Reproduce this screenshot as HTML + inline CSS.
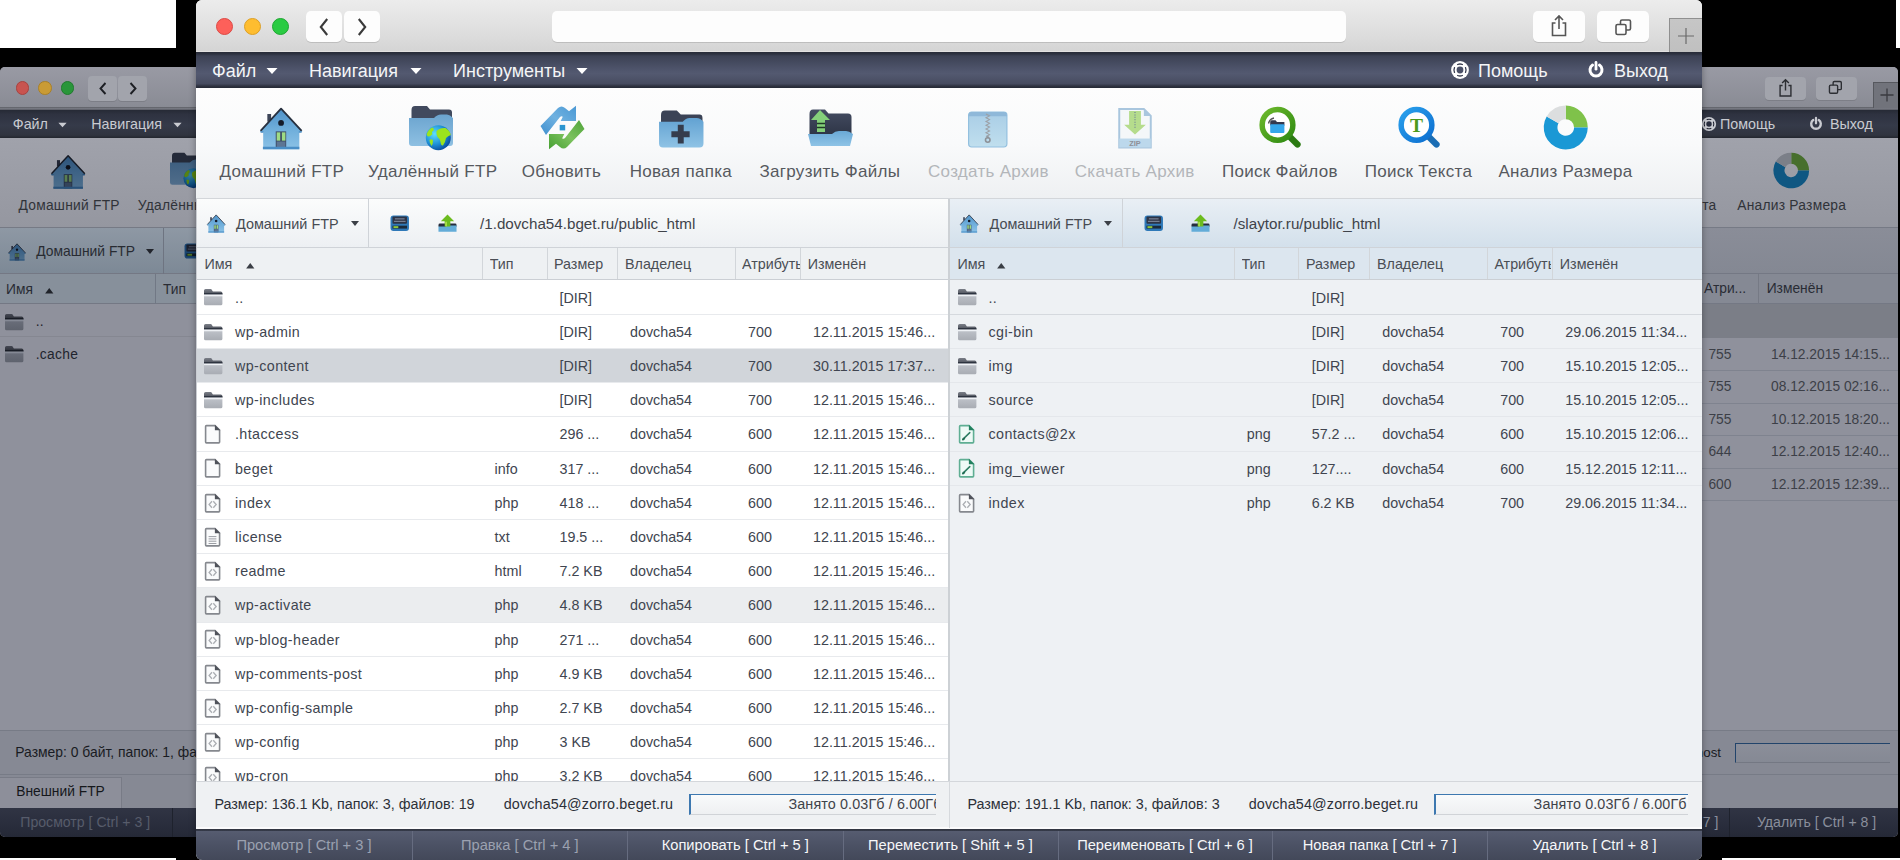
<!DOCTYPE html><html><head><meta charset="utf-8"><style>
*{margin:0;padding:0;box-sizing:border-box}
html,body{width:1900px;height:860px;overflow:hidden;background:#000;font-family:"Liberation Sans", sans-serif;}
.a{position:absolute}
.t{position:absolute;white-space:nowrap}
svg{position:absolute;overflow:visible}
</style></head><body>
<div class="a" style="left:0;top:0;width:176px;height:48px;background:#fff"></div>
<div class="a" style="left:1896px;top:0;width:4px;height:48px;background:#fff"></div>
<div class="a" style="left:0;top:858px;width:176px;height:2px;background:#fff"></div>
<div class="a" style="left:1722px;top:858px;width:178px;height:2px;background:#fff"></div>
<div class="a" style="left:0;top:67px;width:1898px;height:770px;border-radius:5px;overflow:hidden;background:#8f919c">
<div class="a" style="left:0;top:0;width:1898px;height:41px;background:linear-gradient(#999aa4,#898b94)"></div>
<div class="a" style="left:0;top:40px;width:1898px;height:1px;background:#65676e"></div>
<div class="a" style="left:15.600000000000001px;top:14.3px;width:13.4px;height:13.4px;border-radius:50%;background:#c85450;border:1px solid #a8423f"></div>
<div class="a" style="left:38.199999999999996px;top:14.3px;width:13.4px;height:13.4px;border-radius:50%;background:#c99b35;border:1px solid #a8802a"></div>
<div class="a" style="left:60.7px;top:14.3px;width:13.4px;height:13.4px;border-radius:50%;background:#2a963a;border:1px solid #217a2e"></div>
<div class="a" style="left:88px;top:9.2px;width:29px;height:24.39999999999999px;background:#a2a4ac;border-radius:4px;box-shadow:0 1px 0 rgba(0,0,0,.1)"></div>
<div class="a" style="left:118px;top:9.2px;width:29px;height:24.39999999999999px;background:#a2a4ac;border-radius:4px;box-shadow:0 1px 0 rgba(0,0,0,.1)"></div>
<svg style="left:97px;top:14px" width="12" height="15" viewBox="0 0 12 15"><path d="M8.5 2 L3.5 7.5 L8.5 13" stroke="#1d1f24" stroke-width="1.9" fill="none"/></svg>
<svg style="left:127px;top:14px" width="12" height="15" viewBox="0 0 12 15"><path d="M3.5 2 L8.5 7.5 L3.5 13" stroke="#1d1f24" stroke-width="1.9" fill="none"/></svg>
<div class="a" style="left:1765px;top:9.6px;width:41px;height:23.400000000000006px;background:#a2a4ac;border-radius:4px;box-shadow:0 1px 0 rgba(0,0,0,.1)"></div>
<div class="a" style="left:1815.7px;top:9.6px;width:41.299999999999955px;height:23.400000000000006px;background:#a2a4ac;border-radius:4px;box-shadow:0 1px 0 rgba(0,0,0,.1)"></div>
<svg style="left:1777px;top:11px" width="17" height="20" viewBox="0 0 20 24"><path d="M6.5 9 H3.5 V21.5 H16.5 V9 H13.5" stroke="#2c2e33" stroke-width="1.7" fill="none"/><path d="M10 2 V15 M6 6 L10 2 L14 6" stroke="#2c2e33" stroke-width="1.7" fill="none"/></svg>
<svg style="left:1827px;top:12px" width="18" height="18" viewBox="0 0 22 22"><rect x="3" y="7.5" width="10" height="10" rx="1.5" stroke="#2c2e33" stroke-width="1.7" fill="none"/><path d="M7.5 7.5 V4.5 Q7.5 3 9 3 H16 Q17.5 3 17.5 4.5 V11.5 Q17.5 13 16 13 H13" stroke="#2c2e33" stroke-width="1.7" fill="none"/></svg>
<div class="a" style="left:1873px;top:15px;width:30px;height:26px;background:#71737b;border-left:1px solid #56585e;border-top:1px solid #56585e"></div>
<svg style="left:1878px;top:19px" width="18" height="18" viewBox="0 0 22 22"><path d="M11 3 V19 M3 11 H19" stroke="#3a3b40" stroke-width="1.6"/></svg>
<div class="a" style="left:0;top:40.5px;width:1898px;height:2px;background:linear-gradient(#7d7f88,#5a5c65)"></div>
<div class="a" style="left:0;top:42.5px;width:1898px;height:28.5px;background:linear-gradient(#262a35 0,#2e3240 15%,#353a49 55%,#30343f 90%,#23262e 100%)"></div>
<div class="t" style="left:12.8px;top:48.62px;font-size:14.3px;line-height:16.45px;color:#c9cbd1;">Файл</div>
<svg style="left:57.6px;top:55px" width="9" height="6" viewBox="0 0 12 8"><path d="M0.5 1 H11.5 L6 7Z" fill="#c9cbd1"/></svg>
<div class="t" style="left:91.3px;top:48.62px;font-size:14.3px;line-height:16.45px;color:#c9cbd1;">Навигация</div>
<svg style="left:172.7px;top:55px" width="9" height="6" viewBox="0 0 12 8"><path d="M0.5 1 H11.5 L6 7Z" fill="#c9cbd1"/></svg>
<svg style="left:1700.5px;top:48.5px" width="16" height="16" viewBox="0 0 20 20"><circle cx="10" cy="10" r="8.9" fill="#c9cbd1"/><circle cx="10" cy="10" r="3.4" fill="#292e3f"/><path d="M7.6 4.5 A6 6 0 0 1 12.4 4.5 M7.6 15.5 A6 6 0 0 0 12.4 15.5 M4.5 7.6 A6 6 0 0 0 4.5 12.4 M15.5 7.6 A6 6 0 0 1 15.5 12.4" stroke="#202432" stroke-width="1.3" fill="none" stroke-linecap="round"/></svg>
<div class="t" style="left:1720px;top:48.62px;font-size:14.3px;line-height:16.45px;color:#c9cbd1;">Помощь</div>
<svg style="left:1807.5px;top:48.5px" width="16" height="16" viewBox="0 0 20 20"><path d="M6.56 5.08 A6 6 0 1 0 13.44 5.08" stroke="#c9cbd1" stroke-width="3" fill="none" stroke-linecap="round"/><path d="M10 2.4 V9.2" stroke="#c9cbd1" stroke-width="2.8" stroke-linecap="round"/></svg>
<div class="t" style="left:1830px;top:48.62px;font-size:14.3px;line-height:16.45px;color:#c9cbd1;">Выход</div>
<div class="a" style="left:0;top:71px;width:1898px;height:89px;background:linear-gradient(#a0a2ab,#9597a0)"></div>
<div class="a" style="left:0;top:159.5px;width:1898px;height:1px;background:#767a85"></div>
<div class="t" style="left:18.5px;top:130.78px;font-size:13.8px;line-height:15.87px;color:#303339;letter-spacing:0.25px">Домашний FTP</div>
<div class="t" style="left:137.8px;top:130.78px;font-size:13.8px;line-height:15.87px;color:#303339;letter-spacing:0.25px">Удалённый FTP</div>
<div class="t" style="left:1116.5px;width:600px;text-align:right;top:130.78px;font-size:13.8px;line-height:15.87px;color:#303339;letter-spacing:0.25px">Поиск Текста</div>
<div class="t" style="left:1737.2px;top:130.78px;font-size:13.8px;line-height:15.87px;color:#303339;letter-spacing:0.25px">Анализ Размера</div>
<svg style="left:50.5px;top:86.5px" width="34.5" height="35" viewBox="0 0 44 44">
<defs><linearGradient id="hb0" x1="0" y1="0" x2="0" y2="1"><stop offset="0" stop-color="#2c537a"/><stop offset=".5" stop-color="#3e6386"/><stop offset="1" stop-color="#4e6f8c"/></linearGradient></defs>
<rect x="7.6" y="7.5" width="3.9" height="8" fill="#222736"/>
<path d="M0.2 25.6 L21.8 2 L43.5 25.6 L40.7 26.2 V44 H3.3 V26.2Z" fill="url(#hb0)"/>
<path d="M0.6 25 L21.8 2 L43.1 25" stroke="#161b26" stroke-width="1.9" fill="none" stroke-linejoin="round"/>
<path d="M0 25.3 L3.5 25.3 L3.5 27 L0.8 27Z M43.7 25.3 L40.2 25.3 L40.2 27 L42.9 27Z" fill="#295076"/>
<circle cx="21.8" cy="16.7" r="3" fill="#0b0f19"/>
<rect x="16.3" y="25.5" width="10.8" height="18" fill="#232c3e"/>
<rect x="17.3" y="26.5" width="3.6" height="8.6" fill="#587d51"/>
<rect x="22.7" y="26.5" width="3.6" height="8.6" fill="#587d51"/>
<rect x="17.3" y="36" width="9" height="7" fill="#34435a"/>
<rect x="3" y="41.4" width="37.7" height="2.6" fill="#295179"/>
</svg>
<svg style="left:170px;top:84.7px" width="36" height="36" viewBox="0 0 45 45">
<defs><linearGradient id="gf11" x1="0" y1="0" x2="0" y2="1"><stop offset="0" stop-color="#3c5d7e"/><stop offset="1" stop-color="#506d8a"/></linearGradient>
<radialGradient id="gl11" cx=".35" cy=".35" r=".7"><stop offset="0" stop-color="#35809c"/><stop offset=".6" stop-color="#105283"/><stop offset="1" stop-color="#062d62"/></radialGradient></defs>
<path d="M2.5 5 Q2.5 1 6 1 H18 L21 4.5 H40 Q43 4.5 43 7.5 V20 H2.5Z" fill="#242a39"/>
<path d="M0 13 H25 Q28 9.5 32 9.5 H38 Q41 9.5 44 13 V38 Q44 41 41 41 H3 Q0 41 0 38Z" fill="url(#gf11)"/>
<circle cx="29.3" cy="32.7" r="12.5" fill="url(#gl11)"/>
<path d="M17.6 30 Q18.5 25 23 22.5 Q25.5 23 24.5 25.5 Q22 27 23.5 29 Q21.5 31.5 19 31.5Z M20.5 35 Q22.5 33.5 24 35.5 Q24 39 22.5 41 Q20.5 38.5 20.5 35Z M27.5 26 Q31 22.5 36.5 23 Q41 25.5 41.8 30 Q39 31 37 33 Q36.5 37 34 40.5 Q32 41 31.5 37 Q31 33.5 28.5 32 Q27 29 27.5 26Z" fill="#578212"/>
</svg>
<svg style="left:1772.8px;top:84.6px" width="36.5" height="37" viewBox="0 0 46 46">
<path d="M23 0.5 A22.5 22.5 0 0 1 45.5 23 H31.5 A8.5 8.5 0 0 0 23 14.5Z" fill="#476f2d"/>
<path d="M45.5 23 A22.5 22.5 0 1 1 3.5 11.75 L15.6 18.75 A8.5 8.5 0 1 0 31.5 23Z" fill="#0f5782"/>
<path d="M3.5 11.75 A22.5 22.5 0 0 1 23 0.5 V14.5 A8.5 8.5 0 0 0 15.6 18.75Z" fill="#7b7f88"/>
</svg>
<div class="a" style="left:0;top:160.5px;width:950px;height:46px;background:linear-gradient(#8e98a4,#7d8996);border-bottom:1px solid #747884"></div>
<div class="a" style="left:163px;top:160.5px;width:1px;height:46px;background:#6e7481"></div>
<svg style="left:7.8px;top:175.5px" width="18.2" height="17.5" viewBox="0 0 44 44">
<defs><linearGradient id="hb3" x1="0" y1="0" x2="0" y2="1"><stop offset="0" stop-color="#2c537a"/><stop offset=".5" stop-color="#3e6386"/><stop offset="1" stop-color="#4e6f8c"/></linearGradient></defs>
<rect x="7.6" y="7.5" width="3.9" height="8" fill="#222736"/>
<path d="M0.2 25.6 L21.8 2 L43.5 25.6 L40.7 26.2 V44 H3.3 V26.2Z" fill="url(#hb3)"/>
<path d="M0.6 25 L21.8 2 L43.1 25" stroke="#161b26" stroke-width="1.9" fill="none" stroke-linejoin="round"/>
<path d="M0 25.3 L3.5 25.3 L3.5 27 L0.8 27Z M43.7 25.3 L40.2 25.3 L40.2 27 L42.9 27Z" fill="#295076"/>
<circle cx="21.8" cy="16.7" r="3" fill="#0b0f19"/>
<rect x="16.3" y="25.5" width="10.8" height="18" fill="#232c3e"/>
<rect x="17.3" y="26.5" width="3.6" height="8.6" fill="#587d51"/>
<rect x="22.7" y="26.5" width="3.6" height="8.6" fill="#587d51"/>
<rect x="17.3" y="36" width="9" height="7" fill="#34435a"/>
<rect x="3" y="41.4" width="37.7" height="2.6" fill="#295179"/>
</svg>
<div class="t" style="left:36.3px;top:176.73px;font-size:13.86px;line-height:15.94px;color:#282b32;">Домашний FTP</div>
<svg style="left:145.6px;top:182.3px" width="8" height="5" viewBox="0 0 8 5"><path d="M0 0 H8 L4 5Z" fill="#21242b"/></svg>
<svg style="left:184px;top:176px" width="19" height="16" viewBox="0 0 20 17">
<rect x="0.5" y="0.5" width="19" height="16" rx="3" fill="#1a4570"/>
<rect x="2.5" y="1.5" width="15" height="7.5" rx="1" fill="#191e2b"/>
<rect x="5" y="3.5" width="10" height="1" fill="#4d5466"/>
<rect x="4" y="6" width="12" height="1" fill="#4d5466"/>
<rect x="2.5" y="11" width="15" height="3" fill="#0f1924"/>
<rect x="3.5" y="11.5" width="5" height="2" fill="#507223"/>
</svg>
<div class="a" style="left:0;top:206.5px;width:950px;height:30px;background:#87909b;border-bottom:1px solid #747884"></div>
<div class="a" style="left:155.2px;top:206.5px;width:1px;height:30px;background:#717885"></div>
<div class="t" style="left:6.1px;top:214.88px;font-size:13.8px;line-height:15.87px;color:#292c34;">Имя</div>
<svg style="left:44.5px;top:220.5px" width="8.5" height="5.5" viewBox="0 0 9 6"><path d="M0 6 H9 L4.5 0Z" fill="#20232a"/></svg>
<div class="t" style="left:163px;top:214.88px;font-size:13.8px;line-height:15.87px;color:#292c34;">Тип</div>
<div class="a" style="left:0;top:269.2px;width:950px;height:1px;background:#858791"></div>
<svg style="left:5px;top:246.5px" width="18.4" height="16.3" viewBox="0 0 18.4 16.3">
<defs><linearGradient id="ft5" x1="0" y1="0" x2="0" y2="1"><stop offset="0" stop-color="#454853"/><stop offset="1" stop-color="#2a2d36"/></linearGradient>
<linearGradient id="fb5" x1="0" y1="0" x2="0" y2="1"><stop offset="0" stop-color="#696d79"/><stop offset="1" stop-color="#5e626d"/></linearGradient></defs>
<path d="M0 1.6 Q0 0 1.6 0 H7.2 L8.9 2.4 H16.8 Q18.4 2.4 18.4 4 V5.4 H0Z" fill="url(#ft5)"/>
<rect x="0" y="4.3" width="18.4" height="1.2" fill="#11151f"/>
<rect x="0" y="5.6" width="18.4" height="1.7" fill="#858995"/>
<path d="M0 7.3 H18.4 V14.8 Q18.4 16.3 16.9 16.3 H1.5 Q0 16.3 0 14.8Z" fill="url(#fb5)"/>
</svg>
<div class="t" style="left:35.7px;top:247.48px;font-size:13.8px;line-height:15.87px;color:#21242d;letter-spacing:0.3px">..</div>
<svg style="left:5px;top:279.0px" width="18.4" height="16.3" viewBox="0 0 18.4 16.3">
<defs><linearGradient id="ft6" x1="0" y1="0" x2="0" y2="1"><stop offset="0" stop-color="#454853"/><stop offset="1" stop-color="#2a2d36"/></linearGradient>
<linearGradient id="fb6" x1="0" y1="0" x2="0" y2="1"><stop offset="0" stop-color="#696d79"/><stop offset="1" stop-color="#5e626d"/></linearGradient></defs>
<path d="M0 1.6 Q0 0 1.6 0 H7.2 L8.9 2.4 H16.8 Q18.4 2.4 18.4 4 V5.4 H0Z" fill="url(#ft6)"/>
<rect x="0" y="4.3" width="18.4" height="1.2" fill="#11151f"/>
<rect x="0" y="5.6" width="18.4" height="1.7" fill="#858995"/>
<path d="M0 7.3 H18.4 V14.8 Q18.4 16.3 16.9 16.3 H1.5 Q0 16.3 0 14.8Z" fill="url(#fb6)"/>
</svg>
<div class="t" style="left:35.7px;top:279.98px;font-size:13.8px;line-height:15.87px;color:#21242d;letter-spacing:0.3px">.cache</div>
<div class="a" style="left:1690px;top:160.5px;width:210px;height:46px;background:linear-gradient(#8a8d98,#848893);border-bottom:1px solid #747884"></div>
<div class="a" style="left:1690px;top:206.5px;width:210px;height:30px;background:#858994;border-bottom:1px solid #747884"></div>
<div class="a" style="left:1758px;top:206.5px;width:1px;height:30px;background:#767a85"></div>
<div class="t" style="left:1704px;top:214.48px;font-size:13.8px;line-height:15.87px;color:#292c34;">Атри...</div>
<div class="t" style="left:1766.7px;top:214.48px;font-size:13.8px;line-height:15.87px;color:#292c34;">Изменён</div>
<div class="a" style="left:1690px;top:237px;width:210px;height:33.5px;background:#7b7e87"></div>
<div class="a" style="left:1690px;top:303.0px;width:210px;height:1px;background:#7f838f"></div>
<div class="t" style="left:1708.4px;top:279.58px;font-size:13.8px;line-height:15.87px;color:#3c3f47;">755</div>
<div class="t" style="left:1771px;top:279.58px;font-size:13.8px;line-height:15.87px;color:#3c3f47;">14.12.2015 14:15...</div>
<div class="a" style="left:1690px;top:335.5px;width:210px;height:1px;background:#7f838f"></div>
<div class="t" style="left:1708.4px;top:312.08px;font-size:13.8px;line-height:15.87px;color:#3c3f47;">755</div>
<div class="t" style="left:1771px;top:312.08px;font-size:13.8px;line-height:15.87px;color:#3c3f47;">08.12.2015 02:16...</div>
<div class="a" style="left:1690px;top:368.0px;width:210px;height:1px;background:#7f838f"></div>
<div class="t" style="left:1708.4px;top:344.58px;font-size:13.8px;line-height:15.87px;color:#3c3f47;">755</div>
<div class="t" style="left:1771px;top:344.58px;font-size:13.8px;line-height:15.87px;color:#3c3f47;">10.12.2015 18:20...</div>
<div class="a" style="left:1690px;top:400.5px;width:210px;height:1px;background:#7f838f"></div>
<div class="t" style="left:1708.4px;top:377.08px;font-size:13.8px;line-height:15.87px;color:#3c3f47;">644</div>
<div class="t" style="left:1771px;top:377.08px;font-size:13.8px;line-height:15.87px;color:#3c3f47;">12.12.2015 12:40...</div>
<div class="a" style="left:1690px;top:433.0px;width:210px;height:1px;background:#7f838f"></div>
<div class="t" style="left:1708.4px;top:409.58px;font-size:13.8px;line-height:15.87px;color:#3c3f47;">600</div>
<div class="t" style="left:1771px;top:409.58px;font-size:13.8px;line-height:15.87px;color:#3c3f47;">12.12.2015 12:39...</div>
<div class="a" style="left:0;top:663px;width:1898px;height:45px;background:#868994;border-top:1px solid #777b86;border-bottom:1px solid #777b86"></div>
<div class="t" style="left:15.3px;top:677.19px;font-size:13.9px;line-height:15.98px;color:#191b22;">Размер: 0 байт, папок: 1, файлов: 0</div>
<div class="t" style="left:1121px;width:600px;text-align:right;top:677.75px;font-size:13.3px;line-height:15.29px;color:#191b22;">localhost</div>
<div class="a" style="left:1734.6px;top:675.7px;width:155px;height:20px;background:linear-gradient(#8b8e99,#858994);border-top:1.5px solid #22446b;border-left:1.5px solid #22446b;border-bottom:1px solid #747883"></div>
<div class="a" style="left:0;top:708px;width:1898px;height:33px;background:#868994"></div>
<div class="a" style="left:0;top:710px;width:122px;height:31px;background:#8d8f9a;border-right:1px solid #787b86;border-top:1px solid #787b86"></div>
<div class="t" style="left:16.3px;top:716.58px;font-size:13.8px;line-height:15.87px;color:#15171b;">Внешний FTP</div>
<div class="a" style="left:0;top:740.5px;width:1898px;height:30px;background:linear-gradient(#303444,#242836)"></div>
<div class="a" style="left:171.5px;top:740.5px;width:1px;height:30px;background:#1e222d"></div>
<div class="a" style="left:1728.8px;top:740.5px;width:1px;height:30px;background:#1e222d"></div>
<div class="t" style="left:20.3px;top:747.01px;font-size:14.1px;line-height:16.21px;color:#575c6b;">Просмотр [ Ctrl + 3 ]</div>
<div class="t" style="left:1757px;top:747.01px;font-size:14.1px;line-height:16.21px;color:#8a8f9c;">Удалить [ Ctrl + 8 ]</div>
<div class="t" style="left:1118.5px;width:600px;text-align:right;top:747.01px;font-size:14.1px;line-height:16.21px;color:#8a8f9c;">Новая папка [ Ctrl + 7 ]</div>
</div>
<div class="a" style="left:196px;top:0;width:1506px;height:860px;border-radius:6px;overflow:hidden;background:#fff;box-shadow:0 0 7px rgba(0,0,0,.35)">
<div class="a" style="left:0;top:0;width:1506px;height:52px;background:linear-gradient(#ececec,#dcdcdc 70%,#d4d4d4)"></div>
<div class="a" style="left:0;top:50.5px;width:1506px;height:1.5px;background:#e2e0e0"></div>
<div class="a" style="left:19.5px;top:18px;width:17px;height:17px;border-radius:50%;background:#fd605a;border:1px solid #dc4a45"></div>
<div class="a" style="left:47.5px;top:18px;width:17px;height:17px;border-radius:50%;background:#febd30;border:1px solid #dc9f26"></div>
<div class="a" style="left:75.5px;top:18px;width:17px;height:17px;border-radius:50%;background:#2acb42;border:1px solid #1ea631"></div>
<div class="a" style="left:110px;top:11px;width:36px;height:31px;background:#fdfdfd;border-radius:5px;box-shadow:0 1px 0 rgba(0,0,0,.12)"></div>
<div class="a" style="left:148px;top:11px;width:36px;height:31px;background:#fdfdfd;border-radius:5px;box-shadow:0 1px 0 rgba(0,0,0,.12)"></div>
<svg style="left:121px;top:17px" width="14" height="20" viewBox="0 0 14 20"><path d="M10.2 2 L3.8 10 L10.2 18" stroke="#3a3a3a" stroke-width="2.1" fill="none"/></svg>
<svg style="left:159px;top:17px" width="14" height="20" viewBox="0 0 14 20"><path d="M3.8 2 L10.2 10 L3.8 18" stroke="#3a3a3a" stroke-width="2.1" fill="none"/></svg>
<div class="a" style="left:356px;top:11px;width:794px;height:31px;background:#fdfdfd;border-radius:5px;box-shadow:0 1px 0 rgba(0,0,0,.12)"></div>
<div class="a" style="left:1337px;top:11px;width:52px;height:31px;background:#fdfdfd;border-radius:5px;box-shadow:0 1px 0 rgba(0,0,0,.12)"></div>
<div class="a" style="left:1401px;top:11px;width:52px;height:31px;background:#fdfdfd;border-radius:5px;box-shadow:0 1px 0 rgba(0,0,0,.12)"></div>
<svg style="left:1353px;top:14px" width="20" height="24" viewBox="0 0 20 24"><path d="M6.5 9 H3.5 V21.5 H16.5 V9 H13.5" stroke="#555" stroke-width="1.6" fill="none"/><path d="M10 2 V15 M6 6 L10 2 L14 6" stroke="#555" stroke-width="1.6" fill="none"/></svg>
<svg style="left:1417px;top:16.5px" width="22" height="22" viewBox="0 0 22 22"><rect x="3" y="7.5" width="10" height="10" rx="1.5" stroke="#555" stroke-width="1.6" fill="none"/><path d="M7.5 7.5 V4.5 Q7.5 3 9 3 H16 Q17.5 3 17.5 4.5 V11.5 Q17.5 13 16 13 H13" stroke="#555" stroke-width="1.6" fill="none"/></svg>
<div class="a" style="left:1472.5px;top:18px;width:40px;height:34px;background:linear-gradient(#c6c6c6,#c0c0c0);border-left:1.5px solid #8f8f8f;border-top:1.5px solid #8f8f8f"></div>
<svg style="left:1479px;top:24.5px" width="22" height="22" viewBox="0 0 22 22"><path d="M11 3 V19 M3 11 H19" stroke="#6a6a6a" stroke-width="1.2"/></svg>
<div class="a" style="left:0;top:52px;width:1506px;height:36px;background:linear-gradient(#272b37 0,#2d3140 2px,#3c4154 4px,#4f556c 50%,#535970 60%,#474c60 88%,#2e323f 95%,#262a35 100%)"></div>
<div class="t" style="left:16px;top:60.91px;font-size:18px;line-height:20.7px;color:#f4f5f7;">Файл</div><svg style="left:70px;top:67px" width="12" height="8" viewBox="0 0 12 8"><path d="M0.5 1 H11.5 L6 7Z" fill="#fff"/></svg>
<div class="t" style="left:113px;top:60.91px;font-size:18px;line-height:20.7px;color:#f4f5f7;">Навигация</div><svg style="left:214px;top:67px" width="12" height="8" viewBox="0 0 12 8"><path d="M0.5 1 H11.5 L6 7Z" fill="#fff"/></svg>
<div class="t" style="left:257px;top:60.91px;font-size:18px;line-height:20.7px;color:#f4f5f7;">Инструменты</div><svg style="left:380px;top:67px" width="12" height="8" viewBox="0 0 12 8"><path d="M0.5 1 H11.5 L6 7Z" fill="#fff"/></svg>
<svg style="left:1254.2px;top:59.5px" width="20" height="20" viewBox="0 0 20 20"><circle cx="10" cy="10" r="8.9" fill="#fff"/><circle cx="10" cy="10" r="3.4" fill="#4a5067"/><path d="M7.6 4.5 A6 6 0 0 1 12.4 4.5 M7.6 15.5 A6 6 0 0 0 12.4 15.5 M4.5 7.6 A6 6 0 0 0 4.5 12.4 M15.5 7.6 A6 6 0 0 1 15.5 12.4" stroke="#3a3f52" stroke-width="1.3" fill="none" stroke-linecap="round"/></svg>
<div class="t" style="left:1282px;top:60.91px;font-size:18px;line-height:20.7px;color:#f4f5f7;">Помощь</div>
<svg style="left:1390.2px;top:60px" width="20" height="20" viewBox="0 0 20 20"><path d="M6.56 5.08 A6 6 0 1 0 13.44 5.08" stroke="#fff" stroke-width="3" fill="none" stroke-linecap="round"/><path d="M10 2.4 V9.2" stroke="#fff" stroke-width="2.8" stroke-linecap="round"/></svg>
<div class="t" style="left:1418px;top:60.91px;font-size:18px;line-height:20.7px;color:#f4f5f7;">Выход</div>
<div class="a" style="left:0;top:88px;width:1506px;height:111px;background:linear-gradient(#fdfdfd,#f9fafb 50%,#eef0f2)"></div>
<div class="a" style="left:0;top:198px;width:1506px;height:1px;background:#d3d6da"></div>
<div class="t" style="left:23.4px;top:160px;width:122.6px;font-size:17px;line-height:24px;color:#56595e;text-align:center;letter-spacing:0.3px">Домашний FTP</div>
<div class="t" style="left:171.9px;top:160px;width:126.1px;font-size:17px;line-height:24px;color:#56595e;text-align:center;letter-spacing:0.3px">Удалённый FTP</div>
<div class="t" style="left:324.8px;top:160px;width:81.2px;font-size:17px;line-height:24px;color:#56595e;text-align:center;letter-spacing:0.3px">Обновить</div>
<div class="t" style="left:433px;top:160px;width:103.7px;font-size:17px;line-height:24px;color:#56595e;text-align:center;letter-spacing:0.3px">Новая папка</div>
<div class="t" style="left:562.8px;top:160px;width:142.2px;font-size:17px;line-height:24px;color:#56595e;text-align:center;letter-spacing:0.3px">Загрузить Файлы</div>
<div class="t" style="left:732px;top:160px;width:120.4px;font-size:17px;line-height:24px;color:#b3b6ba;text-align:center;letter-spacing:0.3px">Создать Архив</div>
<div class="t" style="left:878px;top:160px;width:121.4px;font-size:17px;line-height:24px;color:#b3b6ba;text-align:center;letter-spacing:0.3px">Скачать Архив</div>
<div class="t" style="left:1025px;top:160px;width:117.8px;font-size:17px;line-height:24px;color:#56595e;text-align:center;letter-spacing:0.3px">Поиск Файлов</div>
<div class="t" style="left:1168.7px;top:160px;width:106.8px;font-size:17px;line-height:24px;color:#56595e;text-align:center;letter-spacing:0.3px">Поиск Текста</div>
<div class="t" style="left:1302.4px;top:160px;width:132.3px;font-size:17px;line-height:24px;color:#56595e;text-align:center;letter-spacing:0.3px">Анализ Размера</div>
<svg style="left:63.6px;top:106px" width="42.5" height="44" viewBox="0 0 44 44">
<defs><linearGradient id="hb7" x1="0" y1="0" x2="0" y2="1"><stop offset="0" stop-color="#4f91c8"/><stop offset=".5" stop-color="#6eaedb"/><stop offset="1" stop-color="#8cc2e6"/></linearGradient></defs>
<rect x="7.6" y="7.5" width="3.9" height="8" fill="#3d4558"/>
<path d="M0.2 25.6 L21.8 2 L43.5 25.6 L40.7 26.2 V44 H3.3 V26.2Z" fill="url(#hb7)"/>
<path d="M0.6 25 L21.8 2 L43.1 25" stroke="#27303f" stroke-width="1.9" fill="none" stroke-linejoin="round"/>
<path d="M0 25.3 L3.5 25.3 L3.5 27 L0.8 27Z M43.7 25.3 L40.2 25.3 L40.2 27 L42.9 27Z" fill="#4a8cc2"/>
<circle cx="21.8" cy="16.7" r="3" fill="#141b29"/>
<rect x="16.3" y="25.5" width="10.8" height="18" fill="#3e4d66"/>
<rect x="17.3" y="26.5" width="3.6" height="8.6" fill="#9edb84"/>
<rect x="22.7" y="26.5" width="3.6" height="8.6" fill="#9edb84"/>
<rect x="17.3" y="36" width="9" height="7" fill="#5d7594"/>
<rect x="3" y="41.4" width="37.7" height="2.6" fill="#4a8ec6"/>
</svg>
<svg style="left:213px;top:105px" width="45" height="45" viewBox="0 0 45 45">
<defs><linearGradient id="gf18" x1="0" y1="0" x2="0" y2="1"><stop offset="0" stop-color="#6ba4cf"/><stop offset="1" stop-color="#8ec0e2"/></linearGradient>
<radialGradient id="gl18" cx=".35" cy=".35" r=".7"><stop offset="0" stop-color="#5ee0ff"/><stop offset=".6" stop-color="#1d8fd6"/><stop offset="1" stop-color="#0a4fa0"/></radialGradient></defs>
<path d="M2.5 5 Q2.5 1 6 1 H18 L21 4.5 H40 Q43 4.5 43 7.5 V20 H2.5Z" fill="#414a5e"/>
<path d="M0 13 H25 Q28 9.5 32 9.5 H38 Q41 9.5 44 13 V38 Q44 41 41 41 H3 Q0 41 0 38Z" fill="url(#gf18)"/>
<circle cx="29.3" cy="32.7" r="12.5" fill="url(#gl18)"/>
<path d="M17.6 30 Q18.5 25 23 22.5 Q25.5 23 24.5 25.5 Q22 27 23.5 29 Q21.5 31.5 19 31.5Z M20.5 35 Q22.5 33.5 24 35.5 Q24 39 22.5 41 Q20.5 38.5 20.5 35Z M27.5 26 Q31 22.5 36.5 23 Q41 25.5 41.8 30 Q39 31 37 33 Q36.5 37 34 40.5 Q32 41 31.5 37 Q31 33.5 28.5 32 Q27 29 27.5 26Z" fill="#9be41e"/>
</svg>
<svg style="left:344px;top:105.3px" width="45" height="45" viewBox="0 0 45 45">
<defs><linearGradient id="rb9" x1="0" y1="1" x2="1" y2="0"><stop offset="0" stop-color="#3f8fcf"/><stop offset=".5" stop-color="#6fb1e0"/><stop offset="1" stop-color="#4a98d4"/></linearGradient>
<linearGradient id="rg9" x1="1" y1="0" x2="0" y2="1"><stop offset="0" stop-color="#4ea33a"/><stop offset=".5" stop-color="#7cc25e"/><stop offset="1" stop-color="#46a032"/></linearGradient></defs>
<path d="M0.5 21 L18 3 Q21.5 0 25 3 L29 6.3 L36 0.7 V16 H20.7 L22.8 11.8 Q21.5 10.5 20 12 L10.2 24.4 L6 30Z" fill="url(#rb9)"/>
<path d="M44.5 24 L27 42 Q23.5 45 20 42 L16 38.7 L9 44.3 V29 H24.3 L22.2 33.2 Q23.5 34.5 25 33 L34.8 20.6 L39 15Z" fill="url(#rg9)"/>
<rect x="19.7" y="19.9" width="5.5" height="5.5" fill="#2a95d0"/>
</svg>
<svg style="left:462.5px;top:109px" width="45.5" height="39.5" viewBox="0 0 46 40">
<defs><linearGradient id="nf110" x1="0" y1="0" x2="0" y2="1"><stop offset="0" stop-color="#62a2d2"/><stop offset="1" stop-color="#8fc3e5"/></linearGradient></defs>
<path d="M2 6 Q2 1.5 6 1.5 H18 L22 5.5 H41 Q44 5.5 44 9 V20 H2Z" fill="#3b4356"/>
<path d="M0 13 H24 Q27 9 31 9 H38 Q42 9 45 13 V35 Q45 39 41 39 H4 Q0 39 0 35Z" fill="url(#nf110)"/>
<path d="M19 16 H25 V22.5 H31 V28.5 H25 V35 H19 V28.5 H12.5 V22.5 H19Z" fill="#353c4c"/>
</svg>
<svg style="left:612px;top:107.8px" width="45" height="39" viewBox="0 0 45 39">
<defs><linearGradient id="up111" x1="0" y1="0" x2="0" y2="1"><stop offset="0" stop-color="#444c62"/><stop offset="1" stop-color="#2d3445"/></linearGradient>
<linearGradient id="up211" x1="0" y1="0" x2="0" y2="1"><stop offset="0" stop-color="#6aa9d6"/><stop offset="1" stop-color="#8ec3e6"/></linearGradient></defs>
<path d="M1.5 6 Q1.5 1.5 5 1.5 H17 L20.5 5.5 H40 Q43.5 5.5 43.5 9 V28 H1.5Z" fill="url(#up111)"/>
<path d="M12 2 L22 12 H17 V24 H9 V12 H3Z" fill="#84cf7a"/>
<path d="M9 15.5 H17 M9 19.5 H17" stroke="#1f3a26" stroke-width="1.6"/>
<path d="M0 26 H24 Q27 23 31 23 H38 Q41 23 45 26 L42 38 H3Z" fill="url(#up211)"/>
</svg>
<svg style="left:772.3px;top:110.6px" width="39.5" height="36.6" viewBox="0 0 40 37">
<defs><linearGradient id="ab12" x1="0" y1="0" x2="0" y2="1"><stop offset="0" stop-color="#a9cde6"/><stop offset="1" stop-color="#c0dfee"/></linearGradient></defs>
<rect x="0.6" y="1" width="38.8" height="35.4" rx="3.2" fill="url(#ab12)" stroke="#93c0df" stroke-width="1.2"/>
<path d="M0.6 4.2 Q0.6 1 3.8 1 H36.2 Q39.4 1 39.4 4.2 V5.2 H0.6Z" fill="#8fb8d9"/>
<path d="M18.2 3 L21.8 4.9 L18.2 6.8 L21.8 8.7 L18.2 10.6 L21.8 12.5 L18.2 14.4 L21.8 16.3 L18.2 18.2 L21.8 20.1 L18.2 22.0 L21.8 23.9 L18.2 25.8" stroke="#9ca0a6" stroke-width="1.1" fill="none"/>
<circle cx="20" cy="29.3" r="2.3" fill="none" stroke="#8d9197" stroke-width="1.6"/>
<path d="M20 25.5 V27.5" stroke="#8d9197" stroke-width="2"/>
</svg>
<svg style="left:921.8px;top:107.8px" width="34" height="40.4" viewBox="0 0 34 41">
<path d="M1 1 H26 L33 8 V40 H1Z" fill="#f4f7f9" stroke="#a9c6de" stroke-width="2"/>
<path d="M26 1 L33 8 H26Z" fill="#a9c6de"/>
<rect x="1" y="31" width="32" height="9" fill="#bcd8ec"/>
<text x="17" y="38.5" font-family="Liberation Sans" font-size="7.5" font-weight="bold" text-anchor="middle" fill="#8e8f97">ZIP</text>
<path d="M11 3 H23 V17 H28 L17 27 L6 17 H11Z" fill="#b5dc8c"/>
<path d="M17 4 V20" stroke="#8aa592" stroke-width="2" stroke-dasharray="1 1.5"/>
</svg>
<svg style="left:1062.6px;top:107px" width="42" height="42" viewBox="0 0 42 42">
<defs><linearGradient id="sg14" x1="0" y1="0" x2="1" y2="1"><stop offset="0" stop-color="#6db92c"/><stop offset="1" stop-color="#2f8a12"/></linearGradient></defs>
<path d="M30.5 29.5 L38.5 37.5" stroke="#2b7a12" stroke-width="6.3" stroke-linecap="round"/>
<circle cx="18.5" cy="17.9" r="15.35" fill="#fff" stroke="url(#sg14)" stroke-width="5.5"/>
<path d="M11.2 14.8 Q11.2 13.3 12.7 13.3 H16.5 L18 15 H25.4 V18.5 H11.2Z" fill="#333a50"/>
<rect x="11.2" y="17.2" width="14.2" height="8.7" rx="1" fill="#35a7ec"/>
<path d="M9.5 16.5 Q10.5 11.8 15 11" stroke="#555" stroke-width="1.3" fill="none"/>
</svg>
<svg style="left:1202px;top:107px" width="42" height="42" viewBox="0 0 42 42">
<defs><linearGradient id="tg15" x1="0" y1="0" x2="1" y2="1"><stop offset="0" stop-color="#2aa0ec"/><stop offset="1" stop-color="#0d6fd0"/></linearGradient></defs>
<path d="M30.5 29.5 L38.5 37.5" stroke="#1a6db4" stroke-width="6.3" stroke-linecap="round"/>
<circle cx="18.5" cy="17.9" r="15.35" fill="#fff" stroke="url(#tg15)" stroke-width="5.5"/>
<text x="18.5" y="25.2" font-family="Liberation Serif" font-size="19.5" font-weight="bold" text-anchor="middle" fill="#4d9a1c">T</text>
</svg>
<svg style="left:1347px;top:105px" width="45.5" height="45" viewBox="0 0 46 46">
<path d="M23 0.5 A22.5 22.5 0 0 1 45.5 23 H31.5 A8.5 8.5 0 0 0 23 14.5Z" fill="#7fc24a"/>
<path d="M45.5 23 A22.5 22.5 0 1 1 3.5 11.75 L15.6 18.75 A8.5 8.5 0 1 0 31.5 23Z" fill="#1a98d5"/>
<path d="M3.5 11.75 A22.5 22.5 0 0 1 23 0.5 V14.5 A8.5 8.5 0 0 0 15.6 18.75Z" fill="#dcdedf"/>
</svg>
<div class="a" style="left:0px;top:199px;width:752.5px;height:582px;background:#ffffff;overflow:hidden">
<div class="a" style="left:0;top:0;width:752.5px;height:49px;background:linear-gradient(#fbfcfc,#edf0f3);border-bottom:1px solid #cfd3d8"></div>
<div class="a" style="left:172px;top:0;width:1px;height:48px;background:#cfd3d8"></div>
<svg style="left:10.7px;top:15px" width="18.5" height="18.6" viewBox="0 0 44 44">
<defs><linearGradient id="hb17" x1="0" y1="0" x2="0" y2="1"><stop offset="0" stop-color="#4f91c8"/><stop offset=".5" stop-color="#6eaedb"/><stop offset="1" stop-color="#8cc2e6"/></linearGradient></defs>
<rect x="7.6" y="7.5" width="3.9" height="8" fill="#3d4558"/>
<path d="M0.2 25.6 L21.8 2 L43.5 25.6 L40.7 26.2 V44 H3.3 V26.2Z" fill="url(#hb17)"/>
<path d="M0.6 25 L21.8 2 L43.1 25" stroke="#27303f" stroke-width="1.9" fill="none" stroke-linejoin="round"/>
<path d="M0 25.3 L3.5 25.3 L3.5 27 L0.8 27Z M43.7 25.3 L40.2 25.3 L40.2 27 L42.9 27Z" fill="#4a8cc2"/>
<circle cx="21.8" cy="16.7" r="3" fill="#141b29"/>
<rect x="16.3" y="25.5" width="10.8" height="18" fill="#3e4d66"/>
<rect x="17.3" y="26.5" width="3.6" height="8.6" fill="#9edb84"/>
<rect x="22.7" y="26.5" width="3.6" height="8.6" fill="#9edb84"/>
<rect x="17.3" y="36" width="9" height="7" fill="#5d7594"/>
<rect x="3" y="41.4" width="37.7" height="2.6" fill="#4a8ec6"/>
</svg>
<div class="t" style="left:40px;top:17.03px;font-size:14.4px;line-height:16.56px;color:#474b52;">Домашний FTP</div>
<svg style="left:154.7px;top:22.3px" width="8" height="5" viewBox="0 0 8 5"><path d="M0 0 H8 L4 5Z" fill="#3b3f46"/></svg>
<svg style="left:194.4px;top:16px" width="19.5" height="16.5" viewBox="0 0 20 17">
<rect x="0.5" y="0.5" width="19" height="16" rx="3" fill="#2f79b8"/>
<rect x="2.5" y="1.5" width="15" height="7.5" rx="1" fill="#2d3446"/>
<rect x="5" y="3.5" width="10" height="1" fill="#8a93a8"/>
<rect x="4" y="6" width="12" height="1" fill="#8a93a8"/>
<rect x="2.5" y="11" width="15" height="3" fill="#1b2b3b"/>
<rect x="3.5" y="11.5" width="5" height="2" fill="#8fc83a"/>
</svg>
<svg style="left:241.6px;top:14.5px" width="19" height="18.3" viewBox="0 0 20 19">
<rect x="0.5" y="10" width="19" height="4" rx="1.5" fill="#262d3d"/>
<path d="M0.5 13 H8 Q11 11.5 14 12 H19.5 V18.5 H0.5Z" fill="#63acd8"/>
<path d="M10 0.5 L17 7.5 H13 V13 H7 V7.5 H3Z" fill="#6cbc1e"/>
<path d="M8.5 8 V13" stroke="#c8f060" stroke-width="1.2"/>
</svg>
<div class="t" style="left:284px;top:15.59px;font-size:15.2px;line-height:17.48px;color:#3f434a;">/1.dovcha54.bget.ru/public_html</div>
<div class="a" style="left:0;top:49px;width:752.5px;height:32px;background:#eef1f3;border-bottom:1px solid #cbcfd4"></div>
<div class="a" style="left:285.7px;top:49px;width:1px;height:31px;background:#d2d6da"></div>
<div class="a" style="left:350.6px;top:49px;width:1px;height:31px;background:#d2d6da"></div>
<div class="a" style="left:421.4px;top:49px;width:1px;height:31px;background:#d2d6da"></div>
<div class="a" style="left:539.0px;top:49px;width:1px;height:31px;background:#d2d6da"></div>
<div class="a" style="left:604.0px;top:49px;width:1px;height:31px;background:#d2d6da"></div>
<div class="a" style="left:8.4px;top:48px;width:277.3px;height:31px;overflow:hidden"><div class="t" style="left:0px;top:8.82px;font-size:14.3px;line-height:16.45px;color:#4a4e55;">Имя</div></div>
<div class="a" style="left:293.7px;top:48px;width:56.9px;height:31px;overflow:hidden"><div class="t" style="left:0px;top:8.82px;font-size:14.3px;line-height:16.45px;color:#4a4e55;">Тип</div></div>
<div class="a" style="left:358.0px;top:48px;width:63.4px;height:31px;overflow:hidden"><div class="t" style="left:0px;top:8.82px;font-size:14.3px;line-height:16.45px;color:#4a4e55;">Размер</div></div>
<div class="a" style="left:429.0px;top:48px;width:110.0px;height:31px;overflow:hidden"><div class="t" style="left:0px;top:8.82px;font-size:14.3px;line-height:16.45px;color:#4a4e55;">Владелец</div></div>
<div class="a" style="left:546.0px;top:48px;width:58.0px;height:31px;overflow:hidden"><div class="t" style="left:0px;top:8.82px;font-size:14.3px;line-height:16.45px;color:#4a4e55;">Атрибуты</div></div>
<div class="a" style="left:611.7px;top:48px;width:140.8px;height:31px;overflow:hidden"><div class="t" style="left:0px;top:8.82px;font-size:14.3px;line-height:16.45px;color:#4a4e55;">Изменён</div></div>
<svg style="left:49.5px;top:63.5px" width="8.5" height="5.5" viewBox="0 0 9 6"><path d="M0 6 H9 L4.5 0Z" fill="#3a3e45"/></svg>
<div class="a" style="left:0;top:114.70px;width:752.5px;height:1px;background:#e8eaed"></div>
<svg style="left:8.4px;top:90.3px" width="18.4" height="16.3" viewBox="0 0 18.4 16.3">
<defs><linearGradient id="ft20" x1="0" y1="0" x2="0" y2="1"><stop offset="0" stop-color="#7b7f88"/><stop offset="1" stop-color="#4b4f59"/></linearGradient>
<linearGradient id="fb20" x1="0" y1="0" x2="0" y2="1"><stop offset="0" stop-color="#bcc0c7"/><stop offset="1" stop-color="#a8acb3"/></linearGradient></defs>
<path d="M0 1.6 Q0 0 1.6 0 H7.2 L8.9 2.4 H16.8 Q18.4 2.4 18.4 4 V5.4 H0Z" fill="url(#ft20)"/>
<rect x="0" y="4.3" width="18.4" height="1.2" fill="#1f2533"/>
<rect x="0" y="5.6" width="18.4" height="1.7" fill="#eef1f5"/>
<path d="M0 7.3 H18.4 V14.8 Q18.4 16.3 16.9 16.3 H1.5 Q0 16.3 0 14.8Z" fill="url(#fb20)"/>
</svg>
<div class="t" style="left:39px;top:90.52px;font-size:14.3px;line-height:16.45px;color:#404550;letter-spacing:0.4px">..</div>
<div class="t" style="left:363.5px;top:90.52px;font-size:14.3px;line-height:16.45px;color:#404550;">[DIR]</div>
<div class="a" style="left:0;top:148.91px;width:752.5px;height:1px;background:#e8eaed"></div>
<svg style="left:8.4px;top:124.51px" width="18.4" height="16.3" viewBox="0 0 18.4 16.3">
<defs><linearGradient id="ft21" x1="0" y1="0" x2="0" y2="1"><stop offset="0" stop-color="#7b7f88"/><stop offset="1" stop-color="#4b4f59"/></linearGradient>
<linearGradient id="fb21" x1="0" y1="0" x2="0" y2="1"><stop offset="0" stop-color="#bcc0c7"/><stop offset="1" stop-color="#a8acb3"/></linearGradient></defs>
<path d="M0 1.6 Q0 0 1.6 0 H7.2 L8.9 2.4 H16.8 Q18.4 2.4 18.4 4 V5.4 H0Z" fill="url(#ft21)"/>
<rect x="0" y="4.3" width="18.4" height="1.2" fill="#1f2533"/>
<rect x="0" y="5.6" width="18.4" height="1.7" fill="#eef1f5"/>
<path d="M0 7.3 H18.4 V14.8 Q18.4 16.3 16.9 16.3 H1.5 Q0 16.3 0 14.8Z" fill="url(#fb21)"/>
</svg>
<div class="t" style="left:39px;top:124.73px;font-size:14.3px;line-height:16.45px;color:#404550;letter-spacing:0.4px">wp-admin</div>
<div class="t" style="left:363.5px;top:124.73px;font-size:14.3px;line-height:16.45px;color:#404550;">[DIR]</div>
<div class="t" style="left:434px;top:124.73px;font-size:14.3px;line-height:16.45px;color:#404550;">dovcha54</div>
<div class="t" style="left:552px;top:124.73px;font-size:14.3px;line-height:16.45px;color:#404550;">700</div>
<div class="t" style="left:617px;top:124.73px;font-size:14.3px;line-height:16.45px;color:#404550;">12.11.2015 15:46...</div>
<div class="a" style="left:0;top:149.52px;width:752.5px;height:34.21px;background:#d1d5da"></div>
<div class="a" style="left:0;top:183.12px;width:752.5px;height:1px;background:#e8eaed"></div>
<svg style="left:8.4px;top:158.71999999999997px" width="18.4" height="16.3" viewBox="0 0 18.4 16.3">
<defs><linearGradient id="ft22" x1="0" y1="0" x2="0" y2="1"><stop offset="0" stop-color="#7b7f88"/><stop offset="1" stop-color="#4b4f59"/></linearGradient>
<linearGradient id="fb22" x1="0" y1="0" x2="0" y2="1"><stop offset="0" stop-color="#bcc0c7"/><stop offset="1" stop-color="#a8acb3"/></linearGradient></defs>
<path d="M0 1.6 Q0 0 1.6 0 H7.2 L8.9 2.4 H16.8 Q18.4 2.4 18.4 4 V5.4 H0Z" fill="url(#ft22)"/>
<rect x="0" y="4.3" width="18.4" height="1.2" fill="#1f2533"/>
<rect x="0" y="5.6" width="18.4" height="1.7" fill="#eef1f5"/>
<path d="M0 7.3 H18.4 V14.8 Q18.4 16.3 16.9 16.3 H1.5 Q0 16.3 0 14.8Z" fill="url(#fb22)"/>
</svg>
<div class="t" style="left:39px;top:158.94px;font-size:14.3px;line-height:16.45px;color:#404550;letter-spacing:0.4px">wp-content</div>
<div class="t" style="left:363.5px;top:158.94px;font-size:14.3px;line-height:16.45px;color:#404550;">[DIR]</div>
<div class="t" style="left:434px;top:158.94px;font-size:14.3px;line-height:16.45px;color:#404550;">dovcha54</div>
<div class="t" style="left:552px;top:158.94px;font-size:14.3px;line-height:16.45px;color:#404550;">700</div>
<div class="t" style="left:617px;top:158.94px;font-size:14.3px;line-height:16.45px;color:#404550;">30.11.2015 17:37...</div>
<div class="a" style="left:0;top:217.33px;width:752.5px;height:1px;background:#e8eaed"></div>
<svg style="left:8.4px;top:192.92999999999998px" width="18.4" height="16.3" viewBox="0 0 18.4 16.3">
<defs><linearGradient id="ft23" x1="0" y1="0" x2="0" y2="1"><stop offset="0" stop-color="#7b7f88"/><stop offset="1" stop-color="#4b4f59"/></linearGradient>
<linearGradient id="fb23" x1="0" y1="0" x2="0" y2="1"><stop offset="0" stop-color="#bcc0c7"/><stop offset="1" stop-color="#a8acb3"/></linearGradient></defs>
<path d="M0 1.6 Q0 0 1.6 0 H7.2 L8.9 2.4 H16.8 Q18.4 2.4 18.4 4 V5.4 H0Z" fill="url(#ft23)"/>
<rect x="0" y="4.3" width="18.4" height="1.2" fill="#1f2533"/>
<rect x="0" y="5.6" width="18.4" height="1.7" fill="#eef1f5"/>
<path d="M0 7.3 H18.4 V14.8 Q18.4 16.3 16.9 16.3 H1.5 Q0 16.3 0 14.8Z" fill="url(#fb23)"/>
</svg>
<div class="t" style="left:39px;top:193.15px;font-size:14.3px;line-height:16.45px;color:#404550;letter-spacing:0.4px">wp-includes</div>
<div class="t" style="left:363.5px;top:193.15px;font-size:14.3px;line-height:16.45px;color:#404550;">[DIR]</div>
<div class="t" style="left:434px;top:193.15px;font-size:14.3px;line-height:16.45px;color:#404550;">dovcha54</div>
<div class="t" style="left:552px;top:193.15px;font-size:14.3px;line-height:16.45px;color:#404550;">700</div>
<div class="t" style="left:617px;top:193.15px;font-size:14.3px;line-height:16.45px;color:#404550;">12.11.2015 15:46...</div>
<div class="a" style="left:0;top:251.54px;width:752.5px;height:1px;background:#e8eaed"></div>
<svg style="left:8.4px;top:225.1px" width="17.2" height="20.5" viewBox="0 0 17.2 20.5">
<path d="M2.4 1.6 H11 L15.6 6.2 V18.1 Q15.6 18.9 14.8 18.9 H2.4 Q1.6 18.9 1.6 18.1 V2.4 Q1.6 1.6 2.4 1.6Z" fill="#fafbfc" stroke="#85888e" stroke-width="1.6"/>
<path d="M10.9 0.8 V6.3 H16.4Z" fill="#50535b"/>
</svg>
<div class="t" style="left:39px;top:227.36px;font-size:14.3px;line-height:16.45px;color:#404550;letter-spacing:0.4px">.htaccess</div>
<div class="t" style="left:363.5px;top:227.36px;font-size:14.3px;line-height:16.45px;color:#404550;">296 ...</div>
<div class="t" style="left:434px;top:227.36px;font-size:14.3px;line-height:16.45px;color:#404550;">dovcha54</div>
<div class="t" style="left:552px;top:227.36px;font-size:14.3px;line-height:16.45px;color:#404550;">600</div>
<div class="t" style="left:617px;top:227.36px;font-size:14.3px;line-height:16.45px;color:#404550;">12.11.2015 15:46...</div>
<div class="a" style="left:0;top:285.75px;width:752.5px;height:1px;background:#e8eaed"></div>
<svg style="left:8.4px;top:259.31px" width="17.2" height="20.5" viewBox="0 0 17.2 20.5">
<path d="M2.4 1.6 H11 L15.6 6.2 V18.1 Q15.6 18.9 14.8 18.9 H2.4 Q1.6 18.9 1.6 18.1 V2.4 Q1.6 1.6 2.4 1.6Z" fill="#fafbfc" stroke="#85888e" stroke-width="1.6"/>
<path d="M10.9 0.8 V6.3 H16.4Z" fill="#50535b"/>
</svg>
<div class="t" style="left:39px;top:261.57px;font-size:14.3px;line-height:16.45px;color:#404550;letter-spacing:0.4px">beget</div>
<div class="t" style="left:298.6px;top:261.57px;font-size:14.3px;line-height:16.45px;color:#404550;">info</div>
<div class="t" style="left:363.5px;top:261.57px;font-size:14.3px;line-height:16.45px;color:#404550;">317 ...</div>
<div class="t" style="left:434px;top:261.57px;font-size:14.3px;line-height:16.45px;color:#404550;">dovcha54</div>
<div class="t" style="left:552px;top:261.57px;font-size:14.3px;line-height:16.45px;color:#404550;">600</div>
<div class="t" style="left:617px;top:261.57px;font-size:14.3px;line-height:16.45px;color:#404550;">12.11.2015 15:46...</div>
<div class="a" style="left:0;top:319.96px;width:752.5px;height:1px;background:#e8eaed"></div>
<svg style="left:8.4px;top:293.52000000000004px" width="17.2" height="20.5" viewBox="0 0 17.2 20.5">
<path d="M2.4 1.6 H11 L15.6 6.2 V18.1 Q15.6 18.9 14.8 18.9 H2.4 Q1.6 18.9 1.6 18.1 V2.4 Q1.6 1.6 2.4 1.6Z" fill="#fafbfc" stroke="#85888e" stroke-width="1.6"/>
<path d="M10.9 0.8 V6.3 H16.4Z" fill="#50535b"/>
<path d="M8 8.2 L5.1 11.5 L8 14.8 M9.3 8.2 L12.2 11.5 L9.3 14.8" stroke="#abaeb3" stroke-width="1.3" fill="none"/></svg>
<div class="t" style="left:39px;top:295.78px;font-size:14.3px;line-height:16.45px;color:#404550;letter-spacing:0.4px">index</div>
<div class="t" style="left:298.6px;top:295.78px;font-size:14.3px;line-height:16.45px;color:#404550;">php</div>
<div class="t" style="left:363.5px;top:295.78px;font-size:14.3px;line-height:16.45px;color:#404550;">418 ...</div>
<div class="t" style="left:434px;top:295.78px;font-size:14.3px;line-height:16.45px;color:#404550;">dovcha54</div>
<div class="t" style="left:552px;top:295.78px;font-size:14.3px;line-height:16.45px;color:#404550;">600</div>
<div class="t" style="left:617px;top:295.78px;font-size:14.3px;line-height:16.45px;color:#404550;">12.11.2015 15:46...</div>
<div class="a" style="left:0;top:354.17px;width:752.5px;height:1px;background:#e8eaed"></div>
<svg style="left:8.4px;top:327.73px" width="17.2" height="20.5" viewBox="0 0 17.2 20.5">
<path d="M2.4 1.6 H11 L15.6 6.2 V18.1 Q15.6 18.9 14.8 18.9 H2.4 Q1.6 18.9 1.6 18.1 V2.4 Q1.6 1.6 2.4 1.6Z" fill="#fafbfc" stroke="#85888e" stroke-width="1.6"/>
<path d="M10.9 0.8 V6.3 H16.4Z" fill="#50535b"/>
<path d="M4.6 9.6H12.4M4.6 11.9H12.4M4.6 14.2H12.4M4.6 16.5H12.4" stroke="#8f9298" stroke-width="0.9"/></svg>
<div class="t" style="left:39px;top:329.99px;font-size:14.3px;line-height:16.45px;color:#404550;letter-spacing:0.4px">license</div>
<div class="t" style="left:298.6px;top:329.99px;font-size:14.3px;line-height:16.45px;color:#404550;">txt</div>
<div class="t" style="left:363.5px;top:329.99px;font-size:14.3px;line-height:16.45px;color:#404550;">19.5 ...</div>
<div class="t" style="left:434px;top:329.99px;font-size:14.3px;line-height:16.45px;color:#404550;">dovcha54</div>
<div class="t" style="left:552px;top:329.99px;font-size:14.3px;line-height:16.45px;color:#404550;">600</div>
<div class="t" style="left:617px;top:329.99px;font-size:14.3px;line-height:16.45px;color:#404550;">12.11.2015 15:46...</div>
<div class="a" style="left:0;top:388.38px;width:752.5px;height:1px;background:#e8eaed"></div>
<svg style="left:8.4px;top:361.94px" width="17.2" height="20.5" viewBox="0 0 17.2 20.5">
<path d="M2.4 1.6 H11 L15.6 6.2 V18.1 Q15.6 18.9 14.8 18.9 H2.4 Q1.6 18.9 1.6 18.1 V2.4 Q1.6 1.6 2.4 1.6Z" fill="#fafbfc" stroke="#85888e" stroke-width="1.6"/>
<path d="M10.9 0.8 V6.3 H16.4Z" fill="#50535b"/>
<path d="M8 8.2 L5.1 11.5 L8 14.8 M9.3 8.2 L12.2 11.5 L9.3 14.8" stroke="#abaeb3" stroke-width="1.3" fill="none"/></svg>
<div class="t" style="left:39px;top:364.20px;font-size:14.3px;line-height:16.45px;color:#404550;letter-spacing:0.4px">readme</div>
<div class="t" style="left:298.6px;top:364.20px;font-size:14.3px;line-height:16.45px;color:#404550;">html</div>
<div class="t" style="left:363.5px;top:364.20px;font-size:14.3px;line-height:16.45px;color:#404550;">7.2 KB</div>
<div class="t" style="left:434px;top:364.20px;font-size:14.3px;line-height:16.45px;color:#404550;">dovcha54</div>
<div class="t" style="left:552px;top:364.20px;font-size:14.3px;line-height:16.45px;color:#404550;">600</div>
<div class="t" style="left:617px;top:364.20px;font-size:14.3px;line-height:16.45px;color:#404550;">12.11.2015 15:46...</div>
<div class="a" style="left:0;top:388.99px;width:752.5px;height:34.21px;background:#ebedef"></div>
<div class="a" style="left:0;top:422.59px;width:752.5px;height:1px;background:#e8eaed"></div>
<svg style="left:8.4px;top:396.15000000000003px" width="17.2" height="20.5" viewBox="0 0 17.2 20.5">
<path d="M2.4 1.6 H11 L15.6 6.2 V18.1 Q15.6 18.9 14.8 18.9 H2.4 Q1.6 18.9 1.6 18.1 V2.4 Q1.6 1.6 2.4 1.6Z" fill="#fafbfc" stroke="#85888e" stroke-width="1.6"/>
<path d="M10.9 0.8 V6.3 H16.4Z" fill="#50535b"/>
<path d="M8 8.2 L5.1 11.5 L8 14.8 M9.3 8.2 L12.2 11.5 L9.3 14.8" stroke="#abaeb3" stroke-width="1.3" fill="none"/></svg>
<div class="t" style="left:39px;top:398.41px;font-size:14.3px;line-height:16.45px;color:#404550;letter-spacing:0.4px">wp-activate</div>
<div class="t" style="left:298.6px;top:398.41px;font-size:14.3px;line-height:16.45px;color:#404550;">php</div>
<div class="t" style="left:363.5px;top:398.41px;font-size:14.3px;line-height:16.45px;color:#404550;">4.8 KB</div>
<div class="t" style="left:434px;top:398.41px;font-size:14.3px;line-height:16.45px;color:#404550;">dovcha54</div>
<div class="t" style="left:552px;top:398.41px;font-size:14.3px;line-height:16.45px;color:#404550;">600</div>
<div class="t" style="left:617px;top:398.41px;font-size:14.3px;line-height:16.45px;color:#404550;">12.11.2015 15:46...</div>
<div class="a" style="left:0;top:456.80px;width:752.5px;height:1px;background:#e8eaed"></div>
<svg style="left:8.4px;top:430.36000000000007px" width="17.2" height="20.5" viewBox="0 0 17.2 20.5">
<path d="M2.4 1.6 H11 L15.6 6.2 V18.1 Q15.6 18.9 14.8 18.9 H2.4 Q1.6 18.9 1.6 18.1 V2.4 Q1.6 1.6 2.4 1.6Z" fill="#fafbfc" stroke="#85888e" stroke-width="1.6"/>
<path d="M10.9 0.8 V6.3 H16.4Z" fill="#50535b"/>
<path d="M8 8.2 L5.1 11.5 L8 14.8 M9.3 8.2 L12.2 11.5 L9.3 14.8" stroke="#abaeb3" stroke-width="1.3" fill="none"/></svg>
<div class="t" style="left:39px;top:432.62px;font-size:14.3px;line-height:16.45px;color:#404550;letter-spacing:0.4px">wp-blog-header</div>
<div class="t" style="left:298.6px;top:432.62px;font-size:14.3px;line-height:16.45px;color:#404550;">php</div>
<div class="t" style="left:363.5px;top:432.62px;font-size:14.3px;line-height:16.45px;color:#404550;">271 ...</div>
<div class="t" style="left:434px;top:432.62px;font-size:14.3px;line-height:16.45px;color:#404550;">dovcha54</div>
<div class="t" style="left:552px;top:432.62px;font-size:14.3px;line-height:16.45px;color:#404550;">600</div>
<div class="t" style="left:617px;top:432.62px;font-size:14.3px;line-height:16.45px;color:#404550;">12.11.2015 15:46...</div>
<div class="a" style="left:0;top:491.01px;width:752.5px;height:1px;background:#e8eaed"></div>
<svg style="left:8.4px;top:464.57px" width="17.2" height="20.5" viewBox="0 0 17.2 20.5">
<path d="M2.4 1.6 H11 L15.6 6.2 V18.1 Q15.6 18.9 14.8 18.9 H2.4 Q1.6 18.9 1.6 18.1 V2.4 Q1.6 1.6 2.4 1.6Z" fill="#fafbfc" stroke="#85888e" stroke-width="1.6"/>
<path d="M10.9 0.8 V6.3 H16.4Z" fill="#50535b"/>
<path d="M8 8.2 L5.1 11.5 L8 14.8 M9.3 8.2 L12.2 11.5 L9.3 14.8" stroke="#abaeb3" stroke-width="1.3" fill="none"/></svg>
<div class="t" style="left:39px;top:466.83px;font-size:14.3px;line-height:16.45px;color:#404550;letter-spacing:0.4px">wp-comments-post</div>
<div class="t" style="left:298.6px;top:466.83px;font-size:14.3px;line-height:16.45px;color:#404550;">php</div>
<div class="t" style="left:363.5px;top:466.83px;font-size:14.3px;line-height:16.45px;color:#404550;">4.9 KB</div>
<div class="t" style="left:434px;top:466.83px;font-size:14.3px;line-height:16.45px;color:#404550;">dovcha54</div>
<div class="t" style="left:552px;top:466.83px;font-size:14.3px;line-height:16.45px;color:#404550;">600</div>
<div class="t" style="left:617px;top:466.83px;font-size:14.3px;line-height:16.45px;color:#404550;">12.11.2015 15:46...</div>
<div class="a" style="left:0;top:525.22px;width:752.5px;height:1px;background:#e8eaed"></div>
<svg style="left:8.4px;top:498.78000000000003px" width="17.2" height="20.5" viewBox="0 0 17.2 20.5">
<path d="M2.4 1.6 H11 L15.6 6.2 V18.1 Q15.6 18.9 14.8 18.9 H2.4 Q1.6 18.9 1.6 18.1 V2.4 Q1.6 1.6 2.4 1.6Z" fill="#fafbfc" stroke="#85888e" stroke-width="1.6"/>
<path d="M10.9 0.8 V6.3 H16.4Z" fill="#50535b"/>
<path d="M8 8.2 L5.1 11.5 L8 14.8 M9.3 8.2 L12.2 11.5 L9.3 14.8" stroke="#abaeb3" stroke-width="1.3" fill="none"/></svg>
<div class="t" style="left:39px;top:501.04px;font-size:14.3px;line-height:16.45px;color:#404550;letter-spacing:0.4px">wp-config-sample</div>
<div class="t" style="left:298.6px;top:501.04px;font-size:14.3px;line-height:16.45px;color:#404550;">php</div>
<div class="t" style="left:363.5px;top:501.04px;font-size:14.3px;line-height:16.45px;color:#404550;">2.7 KB</div>
<div class="t" style="left:434px;top:501.04px;font-size:14.3px;line-height:16.45px;color:#404550;">dovcha54</div>
<div class="t" style="left:552px;top:501.04px;font-size:14.3px;line-height:16.45px;color:#404550;">600</div>
<div class="t" style="left:617px;top:501.04px;font-size:14.3px;line-height:16.45px;color:#404550;">12.11.2015 15:46...</div>
<div class="a" style="left:0;top:559.43px;width:752.5px;height:1px;background:#e8eaed"></div>
<svg style="left:8.4px;top:532.99px" width="17.2" height="20.5" viewBox="0 0 17.2 20.5">
<path d="M2.4 1.6 H11 L15.6 6.2 V18.1 Q15.6 18.9 14.8 18.9 H2.4 Q1.6 18.9 1.6 18.1 V2.4 Q1.6 1.6 2.4 1.6Z" fill="#fafbfc" stroke="#85888e" stroke-width="1.6"/>
<path d="M10.9 0.8 V6.3 H16.4Z" fill="#50535b"/>
<path d="M8 8.2 L5.1 11.5 L8 14.8 M9.3 8.2 L12.2 11.5 L9.3 14.8" stroke="#abaeb3" stroke-width="1.3" fill="none"/></svg>
<div class="t" style="left:39px;top:535.25px;font-size:14.3px;line-height:16.45px;color:#404550;letter-spacing:0.4px">wp-config</div>
<div class="t" style="left:298.6px;top:535.25px;font-size:14.3px;line-height:16.45px;color:#404550;">php</div>
<div class="t" style="left:363.5px;top:535.25px;font-size:14.3px;line-height:16.45px;color:#404550;">3 KB</div>
<div class="t" style="left:434px;top:535.25px;font-size:14.3px;line-height:16.45px;color:#404550;">dovcha54</div>
<div class="t" style="left:552px;top:535.25px;font-size:14.3px;line-height:16.45px;color:#404550;">600</div>
<div class="t" style="left:617px;top:535.25px;font-size:14.3px;line-height:16.45px;color:#404550;">12.11.2015 15:46...</div>
<div class="a" style="left:0;top:593.64px;width:752.5px;height:1px;background:#e8eaed"></div>
<svg style="left:8.4px;top:567.1999999999999px" width="17.2" height="20.5" viewBox="0 0 17.2 20.5">
<path d="M2.4 1.6 H11 L15.6 6.2 V18.1 Q15.6 18.9 14.8 18.9 H2.4 Q1.6 18.9 1.6 18.1 V2.4 Q1.6 1.6 2.4 1.6Z" fill="#fafbfc" stroke="#85888e" stroke-width="1.6"/>
<path d="M10.9 0.8 V6.3 H16.4Z" fill="#50535b"/>
<path d="M8 8.2 L5.1 11.5 L8 14.8 M9.3 8.2 L12.2 11.5 L9.3 14.8" stroke="#abaeb3" stroke-width="1.3" fill="none"/></svg>
<div class="t" style="left:39px;top:569.46px;font-size:14.3px;line-height:16.45px;color:#404550;letter-spacing:0.4px">wp-cron</div>
<div class="t" style="left:298.6px;top:569.46px;font-size:14.3px;line-height:16.45px;color:#404550;">php</div>
<div class="t" style="left:363.5px;top:569.46px;font-size:14.3px;line-height:16.45px;color:#404550;">3.2 KB</div>
<div class="t" style="left:434px;top:569.46px;font-size:14.3px;line-height:16.45px;color:#404550;">dovcha54</div>
<div class="t" style="left:552px;top:569.46px;font-size:14.3px;line-height:16.45px;color:#404550;">600</div>
<div class="t" style="left:617px;top:569.46px;font-size:14.3px;line-height:16.45px;color:#404550;">12.11.2015 15:46...</div>
</div>
<div class="a" style="left:753.5px;top:199px;width:752px;height:582px;background:#eef1f4;overflow:hidden">
<div class="a" style="left:0;top:0;width:752px;height:49px;background:linear-gradient(#e9eff5,#d3e0eb);border-bottom:1px solid #cfd3d8"></div>
<div class="a" style="left:172px;top:0;width:1px;height:48px;background:#cfd3d8"></div>
<svg style="left:10.7px;top:15px" width="18.5" height="18.6" viewBox="0 0 44 44">
<defs><linearGradient id="hb24" x1="0" y1="0" x2="0" y2="1"><stop offset="0" stop-color="#4f91c8"/><stop offset=".5" stop-color="#6eaedb"/><stop offset="1" stop-color="#8cc2e6"/></linearGradient></defs>
<rect x="7.6" y="7.5" width="3.9" height="8" fill="#3d4558"/>
<path d="M0.2 25.6 L21.8 2 L43.5 25.6 L40.7 26.2 V44 H3.3 V26.2Z" fill="url(#hb24)"/>
<path d="M0.6 25 L21.8 2 L43.1 25" stroke="#27303f" stroke-width="1.9" fill="none" stroke-linejoin="round"/>
<path d="M0 25.3 L3.5 25.3 L3.5 27 L0.8 27Z M43.7 25.3 L40.2 25.3 L40.2 27 L42.9 27Z" fill="#4a8cc2"/>
<circle cx="21.8" cy="16.7" r="3" fill="#141b29"/>
<rect x="16.3" y="25.5" width="10.8" height="18" fill="#3e4d66"/>
<rect x="17.3" y="26.5" width="3.6" height="8.6" fill="#9edb84"/>
<rect x="22.7" y="26.5" width="3.6" height="8.6" fill="#9edb84"/>
<rect x="17.3" y="36" width="9" height="7" fill="#5d7594"/>
<rect x="3" y="41.4" width="37.7" height="2.6" fill="#4a8ec6"/>
</svg>
<div class="t" style="left:40px;top:17.03px;font-size:14.4px;line-height:16.56px;color:#474b52;">Домашний FTP</div>
<svg style="left:154.7px;top:22.3px" width="8" height="5" viewBox="0 0 8 5"><path d="M0 0 H8 L4 5Z" fill="#3b3f46"/></svg>
<svg style="left:194.4px;top:16px" width="19.5" height="16.5" viewBox="0 0 20 17">
<rect x="0.5" y="0.5" width="19" height="16" rx="3" fill="#2f79b8"/>
<rect x="2.5" y="1.5" width="15" height="7.5" rx="1" fill="#2d3446"/>
<rect x="5" y="3.5" width="10" height="1" fill="#8a93a8"/>
<rect x="4" y="6" width="12" height="1" fill="#8a93a8"/>
<rect x="2.5" y="11" width="15" height="3" fill="#1b2b3b"/>
<rect x="3.5" y="11.5" width="5" height="2" fill="#8fc83a"/>
</svg>
<svg style="left:241.6px;top:14.5px" width="19" height="18.3" viewBox="0 0 20 19">
<rect x="0.5" y="10" width="19" height="4" rx="1.5" fill="#262d3d"/>
<path d="M0.5 13 H8 Q11 11.5 14 12 H19.5 V18.5 H0.5Z" fill="#63acd8"/>
<path d="M10 0.5 L17 7.5 H13 V13 H7 V7.5 H3Z" fill="#6cbc1e"/>
<path d="M8.5 8 V13" stroke="#c8f060" stroke-width="1.2"/>
</svg>
<div class="t" style="left:284px;top:15.59px;font-size:15.2px;line-height:17.48px;color:#3f434a;">/slaytor.ru/public_html</div>
<div class="a" style="left:0;top:49px;width:752px;height:32px;background:#dce6ef;border-bottom:1px solid #cbcfd4"></div>
<div class="a" style="left:284.2px;top:49px;width:1px;height:31px;background:#d2d6da"></div>
<div class="a" style="left:348.9px;top:49px;width:1px;height:31px;background:#d2d6da"></div>
<div class="a" style="left:419.7px;top:49px;width:1px;height:31px;background:#d2d6da"></div>
<div class="a" style="left:537.5px;top:49px;width:1px;height:31px;background:#d2d6da"></div>
<div class="a" style="left:602.0px;top:49px;width:1px;height:31px;background:#d2d6da"></div>
<div class="a" style="left:7.9px;top:48px;width:276.3px;height:31px;overflow:hidden"><div class="t" style="left:0px;top:8.82px;font-size:14.3px;line-height:16.45px;color:#4a4e55;">Имя</div></div>
<div class="a" style="left:292.0px;top:48px;width:56.9px;height:31px;overflow:hidden"><div class="t" style="left:0px;top:8.82px;font-size:14.3px;line-height:16.45px;color:#4a4e55;">Тип</div></div>
<div class="a" style="left:356.5px;top:48px;width:63.2px;height:31px;overflow:hidden"><div class="t" style="left:0px;top:8.82px;font-size:14.3px;line-height:16.45px;color:#4a4e55;">Размер</div></div>
<div class="a" style="left:427.5px;top:48px;width:110.0px;height:31px;overflow:hidden"><div class="t" style="left:0px;top:8.82px;font-size:14.3px;line-height:16.45px;color:#4a4e55;">Владелец</div></div>
<div class="a" style="left:544.9px;top:48px;width:57.1px;height:31px;overflow:hidden"><div class="t" style="left:0px;top:8.82px;font-size:14.3px;line-height:16.45px;color:#4a4e55;">Атрибуты</div></div>
<div class="a" style="left:610.3px;top:48px;width:141.7px;height:31px;overflow:hidden"><div class="t" style="left:0px;top:8.82px;font-size:14.3px;line-height:16.45px;color:#4a4e55;">Изменён</div></div>
<svg style="left:47px;top:63.5px" width="8.5" height="5.5" viewBox="0 0 9 6"><path d="M0 6 H9 L4.5 0Z" fill="#3a3e45"/></svg>
<div class="a" style="left:0;top:114.70px;width:752px;height:1px;background:#d5d9de"></div>
<svg style="left:8.5px;top:90.3px" width="18.4" height="16.3" viewBox="0 0 18.4 16.3">
<defs><linearGradient id="ft27" x1="0" y1="0" x2="0" y2="1"><stop offset="0" stop-color="#7b7f88"/><stop offset="1" stop-color="#4b4f59"/></linearGradient>
<linearGradient id="fb27" x1="0" y1="0" x2="0" y2="1"><stop offset="0" stop-color="#bcc0c7"/><stop offset="1" stop-color="#a8acb3"/></linearGradient></defs>
<path d="M0 1.6 Q0 0 1.6 0 H7.2 L8.9 2.4 H16.8 Q18.4 2.4 18.4 4 V5.4 H0Z" fill="url(#ft27)"/>
<rect x="0" y="4.3" width="18.4" height="1.2" fill="#1f2533"/>
<rect x="0" y="5.6" width="18.4" height="1.7" fill="#eef1f5"/>
<path d="M0 7.3 H18.4 V14.8 Q18.4 16.3 16.9 16.3 H1.5 Q0 16.3 0 14.8Z" fill="url(#fb27)"/>
</svg>
<div class="t" style="left:39.0px;top:90.52px;font-size:14.3px;line-height:16.45px;color:#404550;letter-spacing:0.4px">..</div>
<div class="t" style="left:362.20000000000005px;top:90.52px;font-size:14.3px;line-height:16.45px;color:#404550;">[DIR]</div>
<div class="a" style="left:0;top:148.91px;width:752px;height:1px;background:#e4e7eb"></div>
<svg style="left:8.5px;top:124.51px" width="18.4" height="16.3" viewBox="0 0 18.4 16.3">
<defs><linearGradient id="ft28" x1="0" y1="0" x2="0" y2="1"><stop offset="0" stop-color="#7b7f88"/><stop offset="1" stop-color="#4b4f59"/></linearGradient>
<linearGradient id="fb28" x1="0" y1="0" x2="0" y2="1"><stop offset="0" stop-color="#bcc0c7"/><stop offset="1" stop-color="#a8acb3"/></linearGradient></defs>
<path d="M0 1.6 Q0 0 1.6 0 H7.2 L8.9 2.4 H16.8 Q18.4 2.4 18.4 4 V5.4 H0Z" fill="url(#ft28)"/>
<rect x="0" y="4.3" width="18.4" height="1.2" fill="#1f2533"/>
<rect x="0" y="5.6" width="18.4" height="1.7" fill="#eef1f5"/>
<path d="M0 7.3 H18.4 V14.8 Q18.4 16.3 16.9 16.3 H1.5 Q0 16.3 0 14.8Z" fill="url(#fb28)"/>
</svg>
<div class="t" style="left:39.0px;top:124.73px;font-size:14.3px;line-height:16.45px;color:#404550;letter-spacing:0.4px">cgi-bin</div>
<div class="t" style="left:362.20000000000005px;top:124.73px;font-size:14.3px;line-height:16.45px;color:#404550;">[DIR]</div>
<div class="t" style="left:432.70000000000005px;top:124.73px;font-size:14.3px;line-height:16.45px;color:#404550;">dovcha54</div>
<div class="t" style="left:550.7px;top:124.73px;font-size:14.3px;line-height:16.45px;color:#404550;">700</div>
<div class="t" style="left:615.7px;top:124.73px;font-size:14.3px;line-height:16.45px;color:#404550;">29.06.2015 11:34...</div>
<div class="a" style="left:0;top:183.12px;width:752px;height:1px;background:#e4e7eb"></div>
<svg style="left:8.5px;top:158.71999999999997px" width="18.4" height="16.3" viewBox="0 0 18.4 16.3">
<defs><linearGradient id="ft29" x1="0" y1="0" x2="0" y2="1"><stop offset="0" stop-color="#7b7f88"/><stop offset="1" stop-color="#4b4f59"/></linearGradient>
<linearGradient id="fb29" x1="0" y1="0" x2="0" y2="1"><stop offset="0" stop-color="#bcc0c7"/><stop offset="1" stop-color="#a8acb3"/></linearGradient></defs>
<path d="M0 1.6 Q0 0 1.6 0 H7.2 L8.9 2.4 H16.8 Q18.4 2.4 18.4 4 V5.4 H0Z" fill="url(#ft29)"/>
<rect x="0" y="4.3" width="18.4" height="1.2" fill="#1f2533"/>
<rect x="0" y="5.6" width="18.4" height="1.7" fill="#eef1f5"/>
<path d="M0 7.3 H18.4 V14.8 Q18.4 16.3 16.9 16.3 H1.5 Q0 16.3 0 14.8Z" fill="url(#fb29)"/>
</svg>
<div class="t" style="left:39.0px;top:158.94px;font-size:14.3px;line-height:16.45px;color:#404550;letter-spacing:0.4px">img</div>
<div class="t" style="left:362.20000000000005px;top:158.94px;font-size:14.3px;line-height:16.45px;color:#404550;">[DIR]</div>
<div class="t" style="left:432.70000000000005px;top:158.94px;font-size:14.3px;line-height:16.45px;color:#404550;">dovcha54</div>
<div class="t" style="left:550.7px;top:158.94px;font-size:14.3px;line-height:16.45px;color:#404550;">700</div>
<div class="t" style="left:615.7px;top:158.94px;font-size:14.3px;line-height:16.45px;color:#404550;">15.10.2015 12:05...</div>
<div class="a" style="left:0;top:217.33px;width:752px;height:1px;background:#e4e7eb"></div>
<svg style="left:8.5px;top:192.92999999999998px" width="18.4" height="16.3" viewBox="0 0 18.4 16.3">
<defs><linearGradient id="ft30" x1="0" y1="0" x2="0" y2="1"><stop offset="0" stop-color="#7b7f88"/><stop offset="1" stop-color="#4b4f59"/></linearGradient>
<linearGradient id="fb30" x1="0" y1="0" x2="0" y2="1"><stop offset="0" stop-color="#bcc0c7"/><stop offset="1" stop-color="#a8acb3"/></linearGradient></defs>
<path d="M0 1.6 Q0 0 1.6 0 H7.2 L8.9 2.4 H16.8 Q18.4 2.4 18.4 4 V5.4 H0Z" fill="url(#ft30)"/>
<rect x="0" y="4.3" width="18.4" height="1.2" fill="#1f2533"/>
<rect x="0" y="5.6" width="18.4" height="1.7" fill="#eef1f5"/>
<path d="M0 7.3 H18.4 V14.8 Q18.4 16.3 16.9 16.3 H1.5 Q0 16.3 0 14.8Z" fill="url(#fb30)"/>
</svg>
<div class="t" style="left:39.0px;top:193.15px;font-size:14.3px;line-height:16.45px;color:#404550;letter-spacing:0.4px">source</div>
<div class="t" style="left:362.20000000000005px;top:193.15px;font-size:14.3px;line-height:16.45px;color:#404550;">[DIR]</div>
<div class="t" style="left:432.70000000000005px;top:193.15px;font-size:14.3px;line-height:16.45px;color:#404550;">dovcha54</div>
<div class="t" style="left:550.7px;top:193.15px;font-size:14.3px;line-height:16.45px;color:#404550;">700</div>
<div class="t" style="left:615.7px;top:193.15px;font-size:14.3px;line-height:16.45px;color:#404550;">15.10.2015 12:05...</div>
<div class="a" style="left:0;top:251.54px;width:752px;height:1px;background:#e4e7eb"></div>
<svg style="left:8.0px;top:225.1px" width="17.2" height="20.5" viewBox="0 0 17.2 20.5">
<path d="M2.4 1.6 H11 L15.6 6.2 V18.1 Q15.6 18.9 14.8 18.9 H2.4 Q1.6 18.9 1.6 18.1 V2.4 Q1.6 1.6 2.4 1.6Z" fill="#eefaf6" stroke="#5fae93" stroke-width="1.6"/>
<path d="M10.9 0.8 V6.3 H16.4Z" fill="#23805f"/>
<path d="M6.6 13.6 L11.8 8.6" stroke="#2d7d63" stroke-width="1.5" stroke-linecap="round"/><ellipse cx="5.6" cy="14.8" rx="1.9" ry="1.2" transform="rotate(-45 5.6 14.8)" fill="#1f6d54"/></svg>
<div class="t" style="left:39.0px;top:227.36px;font-size:14.3px;line-height:16.45px;color:#404550;letter-spacing:0.4px">contacts@2x</div>
<div class="t" style="left:297.3000000000002px;top:227.36px;font-size:14.3px;line-height:16.45px;color:#404550;">png</div>
<div class="t" style="left:362.20000000000005px;top:227.36px;font-size:14.3px;line-height:16.45px;color:#404550;">57.2 ...</div>
<div class="t" style="left:432.70000000000005px;top:227.36px;font-size:14.3px;line-height:16.45px;color:#404550;">dovcha54</div>
<div class="t" style="left:550.7px;top:227.36px;font-size:14.3px;line-height:16.45px;color:#404550;">600</div>
<div class="t" style="left:615.7px;top:227.36px;font-size:14.3px;line-height:16.45px;color:#404550;">15.10.2015 12:06...</div>
<div class="a" style="left:0;top:285.75px;width:752px;height:1px;background:#e4e7eb"></div>
<svg style="left:8.0px;top:259.31px" width="17.2" height="20.5" viewBox="0 0 17.2 20.5">
<path d="M2.4 1.6 H11 L15.6 6.2 V18.1 Q15.6 18.9 14.8 18.9 H2.4 Q1.6 18.9 1.6 18.1 V2.4 Q1.6 1.6 2.4 1.6Z" fill="#eefaf6" stroke="#5fae93" stroke-width="1.6"/>
<path d="M10.9 0.8 V6.3 H16.4Z" fill="#23805f"/>
<path d="M6.6 13.6 L11.8 8.6" stroke="#2d7d63" stroke-width="1.5" stroke-linecap="round"/><ellipse cx="5.6" cy="14.8" rx="1.9" ry="1.2" transform="rotate(-45 5.6 14.8)" fill="#1f6d54"/></svg>
<div class="t" style="left:39.0px;top:261.57px;font-size:14.3px;line-height:16.45px;color:#404550;letter-spacing:0.4px">img_viewer</div>
<div class="t" style="left:297.3000000000002px;top:261.57px;font-size:14.3px;line-height:16.45px;color:#404550;">png</div>
<div class="t" style="left:362.20000000000005px;top:261.57px;font-size:14.3px;line-height:16.45px;color:#404550;">127....</div>
<div class="t" style="left:432.70000000000005px;top:261.57px;font-size:14.3px;line-height:16.45px;color:#404550;">dovcha54</div>
<div class="t" style="left:550.7px;top:261.57px;font-size:14.3px;line-height:16.45px;color:#404550;">600</div>
<div class="t" style="left:615.7px;top:261.57px;font-size:14.3px;line-height:16.45px;color:#404550;">15.12.2015 12:11...</div>
<svg style="left:8.0px;top:293.52000000000004px" width="17.2" height="20.5" viewBox="0 0 17.2 20.5">
<path d="M2.4 1.6 H11 L15.6 6.2 V18.1 Q15.6 18.9 14.8 18.9 H2.4 Q1.6 18.9 1.6 18.1 V2.4 Q1.6 1.6 2.4 1.6Z" fill="#fafbfc" stroke="#85888e" stroke-width="1.6"/>
<path d="M10.9 0.8 V6.3 H16.4Z" fill="#50535b"/>
<path d="M8 8.2 L5.1 11.5 L8 14.8 M9.3 8.2 L12.2 11.5 L9.3 14.8" stroke="#abaeb3" stroke-width="1.3" fill="none"/></svg>
<div class="t" style="left:39.0px;top:295.78px;font-size:14.3px;line-height:16.45px;color:#404550;letter-spacing:0.4px">index</div>
<div class="t" style="left:297.3000000000002px;top:295.78px;font-size:14.3px;line-height:16.45px;color:#404550;">php</div>
<div class="t" style="left:362.20000000000005px;top:295.78px;font-size:14.3px;line-height:16.45px;color:#404550;">6.2 KB</div>
<div class="t" style="left:432.70000000000005px;top:295.78px;font-size:14.3px;line-height:16.45px;color:#404550;">dovcha54</div>
<div class="t" style="left:550.7px;top:295.78px;font-size:14.3px;line-height:16.45px;color:#404550;">700</div>
<div class="t" style="left:615.7px;top:295.78px;font-size:14.3px;line-height:16.45px;color:#404550;">29.06.2015 11:34...</div>
</div>
<div class="a" style="left:0;top:199px;width:1px;height:582px;background:#c9ccd1"></div>
<div class="a" style="left:752.4px;top:199px;width:1.8px;height:582px;background:#cdd1d5"></div>
<div class="a" style="left:0;top:781px;width:1506px;height:48px;background:#eff1f3;border-top:1px solid #d4d7db"></div>
<div class="a" style="left:0;top:827px;width:1506px;height:2px;background:#fbfbfc"></div>
<div class="a" style="left:753px;top:781px;width:1px;height:47px;background:#d6d9dd"></div>
<div class="t" style="left:18.4px;top:796.18px;font-size:14.35px;line-height:16.5px;color:#2c3038;">Размер: 136.1 Kb, папок: 3, файлов: 19</div>
<div class="t" style="left:307.7px;top:796.18px;font-size:14.35px;line-height:16.5px;color:#2c3038;letter-spacing:0.15px">dovcha54@zorro.beget.ru</div>
<div class="t" style="left:771.4px;top:796.18px;font-size:14.35px;line-height:16.5px;color:#2c3038;">Размер: 191.1 Kb, папок: 3, файлов: 3</div>
<div class="t" style="left:1052.7px;top:796.18px;font-size:14.35px;line-height:16.5px;color:#2c3038;letter-spacing:0.15px">dovcha54@zorro.beget.ru</div>
<div class="a" style="left:492.7px;top:794px;width:247.1px;height:21px;background:linear-gradient(#f9fafb,#eef0f2);border-top:1.5px solid #3d78b0;border-left:2px solid #3d78b0;border-bottom:1px solid #d0d3d7;overflow:hidden"><div class="t" style="left:97.8px;top:1px;font-size:14.35px;line-height:17px;color:#3f434a;letter-spacing:0.12px">Занято 0.03Гб / 6.00Гб</div></div>
<div class="a" style="left:1237.8px;top:794px;width:254.2px;height:21px;background:linear-gradient(#f9fafb,#eef0f2);border-top:1.5px solid #3d78b0;border-left:2px solid #3d78b0;border-bottom:1px solid #d0d3d7;overflow:hidden"><div class="t" style="left:97.8px;top:1px;font-size:14.35px;line-height:17px;color:#3f434a;letter-spacing:0.12px">Занято 0.03Гб / 6.00Гб</div></div>
<div class="a" style="left:0;top:829.3px;width:1506px;height:31px;background:linear-gradient(#30343f 0,#353a48 1.6px,#565c70 2.4px,#4c5265 50%,#434859)"></div>
<div class="t" style="left:0px;top:835.5px;width:216.0px;font-size:14.7px;line-height:18px;color:#9ba1b0;text-align:center">Просмотр [ Ctrl + 3 ]</div>
<div class="a" style="left:215.7px;top:831px;width:1.2px;height:29px;background:#666c80"></div>
<div class="t" style="left:216px;top:835.5px;width:215.6px;font-size:14.7px;line-height:18px;color:#9ba1b0;text-align:center">Правка [ Ctrl + 4 ]</div>
<div class="a" style="left:431.3px;top:831px;width:1.2px;height:29px;background:#666c80"></div>
<div class="t" style="left:431.6px;top:835.5px;width:215.4px;font-size:14.7px;line-height:18px;color:#f6f7f9;text-align:center">Копировать [ Ctrl + 5 ]</div>
<div class="a" style="left:646.7px;top:831px;width:1.2px;height:29px;background:#666c80"></div>
<div class="t" style="left:647px;top:835.5px;width:214.8px;font-size:14.7px;line-height:18px;color:#f6f7f9;text-align:center">Переместить [ Shift + 5 ]</div>
<div class="a" style="left:861.5px;top:831px;width:1.2px;height:29px;background:#666c80"></div>
<div class="t" style="left:861.8px;top:835.5px;width:214.5px;font-size:14.7px;line-height:18px;color:#f6f7f9;text-align:center">Переименовать [ Ctrl + 6 ]</div>
<div class="a" style="left:1076.0px;top:831px;width:1.2px;height:29px;background:#666c80"></div>
<div class="t" style="left:1076.3px;top:835.5px;width:214.7px;font-size:14.7px;line-height:18px;color:#f6f7f9;text-align:center">Новая папка [ Ctrl + 7 ]</div>
<div class="a" style="left:1290.7px;top:831px;width:1.2px;height:29px;background:#666c80"></div>
<div class="t" style="left:1291px;top:835.5px;width:215.0px;font-size:14.7px;line-height:18px;color:#f6f7f9;text-align:center">Удалить [ Ctrl + 8 ]</div>
</div>
</body></html>
